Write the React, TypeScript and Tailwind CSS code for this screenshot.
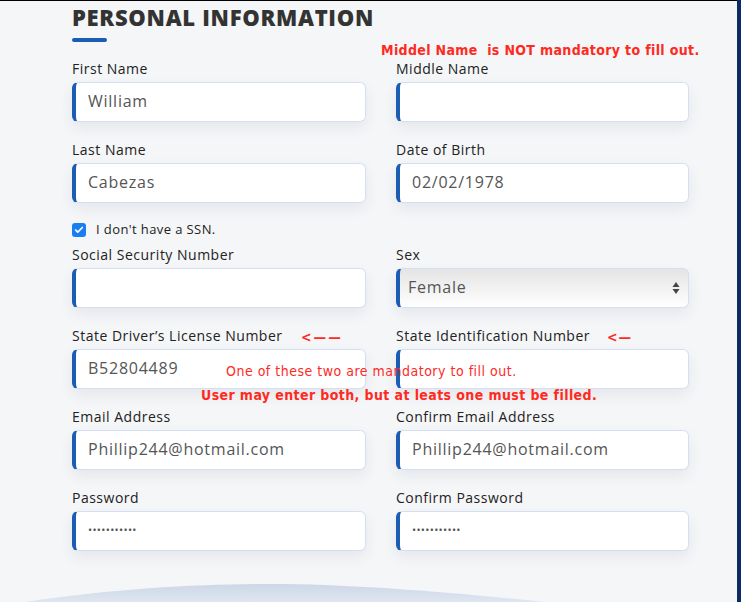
import { Check } from "lucide-react";

const labelFont = { fontFamily: '"Open Sans", "Noto Sans", sans-serif' };

interface FieldProps {
  label: string;
  value?: string;
  password?: boolean;
}

function Field({ label, value = "", password = false }: FieldProps) {
  return (
    <div className="flex flex-col">
      <label className="h-5 text-[14px] leading-5 tracking-[0.5px] text-[#222]">{label}</label>
      <div className="mt-[3px] flex h-10 items-center rounded-md border border-[#d4e0f2] border-l-4 border-l-[#1c5db4] bg-white pb-[2px] pl-3 shadow-[0_6px_14px_rgba(30,50,90,0.08)]">
        {password ? (
          <span className="text-[11px] tracking-[0.3px] text-[#555]">•••••••••••</span>
        ) : (
          <span className="text-[16px] tracking-[0.75px] text-[#555]">{value}</span>
        )}
      </div>
    </div>
  );
}

function SelectField() {
  return (
    <div className="flex flex-col">
      <label className="h-5 text-[14px] leading-5 tracking-[0.5px] text-[#222]">Sex</label>
      <div className="mt-[3px] flex h-10 items-center justify-between rounded-md border border-[#d4e0f2] border-l-4 border-l-[#1c5db4] bg-gradient-to-b from-[#e4e4e4] to-white pl-2 pr-2 shadow-[0_6px_14px_rgba(30,50,90,0.08)]">
        <span className="pb-[2px] text-[16px] tracking-[0.75px] text-[#555]">Female</span>
        <svg width="8" height="14" viewBox="0 0 8 14" aria-hidden>
          <path d="M4 1 L7.5 6 H0.5 Z" fill="#444" />
          <path d="M4 13 L7.5 8 H0.5 Z" fill="#444" />
        </svg>
      </div>
    </div>
  );
}

export default function App() {
  return (
    <div
      className="relative flex h-[602px] w-[741px] overflow-hidden bg-[#f5f6f8]"
      style={labelFont}
    >
      <div className="relative flex-1 border-t border-black">
        <div className="pl-[72px] pt-[2px]">
          <h1 className="text-[22px] font-extrabold leading-7 tracking-[0.7px] text-[#333]">
            PERSONAL INFORMATION
          </h1>
          <div className="mt-[7px] h-[4px] w-[35px] rounded-full bg-[#1c5db4]" />

          <div className="mt-[17px] grid w-[617px] grid-cols-[294px_293px] gap-x-[30px] gap-y-[18px]">
            <Field label="First Name" value="William" />
            <Field label="Middle Name" />
            <Field label="Last Name" value="Cabezas" />
            <Field label="Date of Birth" value="02/02/1978" />
          </div>

          <div className="mt-[17px] flex h-5 items-center gap-[10px]">
            <span className="flex h-[14px] w-[14px] items-center justify-center rounded-[3px] bg-[#1a7df0]">
              <Check className="h-[10px] w-[10px] text-white" strokeWidth={4} />
            </span>
            <span className="text-[13px] tracking-[0.4px] text-[#222]">I don't have a SSN.</span>
          </div>

          <div className="mt-[5px] grid w-[617px] grid-cols-[294px_293px] gap-x-[30px] gap-y-[18px]">
            <Field label="Social Security Number" />
            <SelectField />
            <Field label="State Driver’s License Number" value="B52804489" />
            <Field label="State Identification Number" />
            <Field label="Email Address" value="Phillip244@hotmail.com" />
            <Field label="Confirm Email Address" value="Phillip244@hotmail.com" />
            <Field label="Password" password />
            <Field label="Confirm Password" password />
          </div>
        </div>

        <svg
          className="absolute bottom-0 left-0"
          width="737"
          height="22"
          viewBox="0 0 737 22"
          aria-hidden
        >
          <defs>
            <linearGradient id="wave" x1="0" y1="0" x2="0" y2="1">
              <stop offset="0" stopColor="#cdd7e6" />
              <stop offset="1" stopColor="#dfe6f1" />
            </linearGradient>
          </defs>
          <path d="M25 22 C 120 8, 200 4, 270 4 C 350 4, 450 12, 545 22 Z" fill="url(#wave)" />
        </svg>

        <div
          className="pointer-events-none absolute inset-0 text-[#ff2a1f]"
          style={{ fontFamily: '"DejaVu Sans Condensed", "DejaVu Sans", sans-serif' }}
        >
          <p className="absolute left-[381px] top-[39px] text-[14px] font-bold tracking-[0.35px]">
            Middel Name&nbsp; is NOT mandatory to fill out.
          </p>
          <p className="absolute left-[301px] top-[326px] text-[14px] font-bold tracking-[2px]">&lt;——</p>
          <p className="absolute left-[607px] top-[326px] text-[14px] font-bold tracking-[1px]">&lt;—</p>
          <p className="absolute left-[226px] top-[360px] text-[14px] tracking-[0.5px]">
            One of these two are mandatory to fill out.
          </p>
          <p className="absolute left-[201px] top-[384px] text-[14px] font-bold tracking-[0.4px]">
            User may enter both, but at leats one must be filled.
          </p>
        </div>
      </div>
      <div className="w-[4px] bg-[#0b2a66]" />
    </div>
  );
}
